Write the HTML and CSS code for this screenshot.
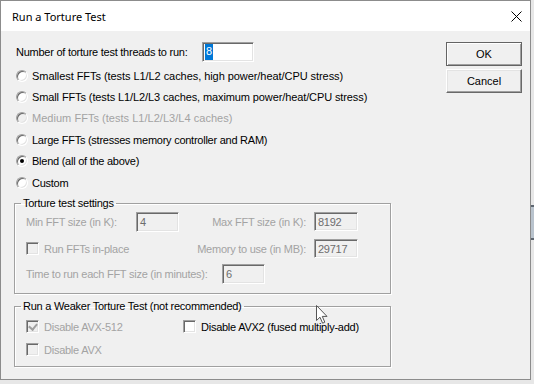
FILE: index.html
```html
<!DOCTYPE html>
<html>
<head>
<meta charset="utf-8">
<title>Run a Torture Test</title>
<link rel="stylesheet" href="styles.css">
</head>
<body>
<div class="window">
  <div class="titlebar">
    <span class="title">Run a Torture Test</span>
    <svg class="close" width="11" height="11" viewBox="0 0 11 11"><path d="M0.5 0.5L10.5 10.5M10.5 0.5L0.5 10.5" stroke="#000" stroke-width="1" fill="none"/></svg>
  </div>
  <div class="client">
    <div class="main">
      <div class="threads">
        <span class="threads-label">Number of torture test threads to run:</span>
        <div class="edit threads-edit"><span class="sel">8</span></div>
      </div>
      <div class="radios">
        <div class="radio-row wide1"><span class="radio"></span><span>Smallest FFTs (tests L1/L2 caches, high power/heat/CPU stress)</span></div>
        <div class="radio-row wide2"><span class="radio"></span><span>Small FFTs (tests L1/L2/L3 caches, maximum power/heat/CPU stress)</span></div>
        <div class="radio-row disabled wide3"><span class="radio"></span><span>Medium FFTs (tests L1/L2/L3/L4 caches)</span></div>
        <div class="radio-row"><span class="radio"></span><span>Large FFTs (stresses memory controller and RAM)</span></div>
        <div class="radio-row"><span class="radio checked"></span><span>Blend (all of the above)</span></div>
        <div class="radio-row"><span class="radio"></span><span>Custom</span></div>
      </div>
      <fieldset class="group settings">
        <legend>Torture test settings</legend>
        <div class="grid-row first">
          <span class="dim">Min FFT size (in K):</span>
          <div class="edit dis">4</div>
          <span class="dim right">Max FFT size (in K):</span>
          <div class="edit dis short">8192</div>
        </div>
        <div class="grid-row second">
          <label class="check-item span2 dim"><span class="check dis"></span>Run FFTs in-place</label>
          <span class="dim right">Memory to use (in MB):</span>
          <div class="edit dis short">29717</div>
        </div>
        <div class="time-row">
          <span class="dim time-label">Time to run each FFT size (in minutes):</span>
          <div class="edit dis">6</div>
        </div>
      </fieldset>
      <fieldset class="group weaker">
        <legend>Run a Weaker Torture Test (not recommended)</legend>
        <div class="check-row">
          <label class="check-item first-col dim"><span class="check dis checked"></span>Disable AVX-512</label>
          <label class="check-item"><span class="check"></span>Disable AVX2 (fused multiply-add)</label>
        </div>
        <div class="check-row second">
          <label class="check-item first-col dim"><span class="check dis"></span>Disable AVX</label>
        </div>
      </fieldset>
    </div>
    <div class="buttons">
      <button class="btn default">OK</button>
      <button class="btn">Cancel</button>
    </div>
  </div>
</div>
<svg class="cursor" width="13" height="20" viewBox="0 0 13 20"><path d="M0.5 0.5L0.5 15.5L4 12.2L6.6 18.2L8.8 17.2L6.3 11.4L11 11.4Z" fill="#fff" stroke="#555" stroke-width="1" stroke-linejoin="round"/></svg>
</body>
</html>
```
FILE: styles.css
```css
* { box-sizing: border-box; }
html, body { margin: 0; height: 100%; }
body {
  position: relative;
  overflow: hidden;
  background:
    linear-gradient(#5d6670, #5d6670) 531px 205px / 3px 2px no-repeat,
    linear-gradient(#b9c3cd, #b9c3cd) 531px 207px / 3px 31px no-repeat,
    linear-gradient(#5d6670, #5d6670) 531px 238px / 3px 2px no-repeat,
    #e7e7e7;
  font-family: "Liberation Sans", Arial, sans-serif;
  font-size: 11px;
  letter-spacing: -0.25px;
  color: #000;
}
.window {
  width: 531px;
  height: 380px;
  border: 1px solid #8c8c8c;
  background: #f0f0f0;
  display: flex;
  flex-direction: column;
}
.titlebar {
  height: 30px;
  flex: none;
  background: #fff;
  display: flex;
  align-items: center;
  justify-content: space-between;
  padding: 0 8px 0 11px;
  font-family: "Noto Sans", "Open Sans", sans-serif;
  font-size: 11px;
  letter-spacing: 0;
}
.close { display: block; }
.client {
  display: flex;
  padding: 11px 8px 0 13px;
  flex: 1;
}
.main { width: 377px; flex: none; }
.threads {
  display: flex;
  align-items: center;
  height: 20px;
  padding-left: 2px;
}
.threads-label { width: 186px; flex: none; }
.edit {
  height: 20px;
  width: 43px;
  flex: none;
  border: 1px solid;
  border-color: #a0a0a0 #ffffff #ffffff #a0a0a0;
  box-shadow: inset 1px 1px 0 #696969, inset -1px -1px 0 #e3e3e3;
  background: #fff;
  padding: 0 2px 0 3px;
  display: flex;
  align-items: center;
}
.threads-edit { width: 52px; padding-left: 2px; }
.sel {
  background: #0078d7;
  color: #fff;
  padding: 1px 1px 2px;
  line-height: 13px;
}
.edit.dis { background: #f0f0f0; color: #6d6d6d; }
.edit.short { width: 44px; height: 19px; }
.radios { margin-top: 3px; padding-left: 2px; }
.radio-row {
  height: 21.4px;
  display: flex;
  align-items: center;
}
.radio-row.wide1 { letter-spacing: -0.06px; }
.radio-row.wide2 { letter-spacing: -0.11px; }
.radio-row.wide3 { letter-spacing: 0.03px; }
.radio-row.disabled { color: #a3a3a3; }
.radio {
  position: relative;
  width: 12px;
  height: 12px;
  flex: none;
  margin-right: 4px;
  border-radius: 50%;
  background: #fff;
  border: 1px solid;
  border-color: #a0a0a0 #ffffff #ffffff #a0a0a0;
  box-shadow: inset 1px 1px 0 #696969, inset -1px -1px 0 #e3e3e3;
}
.disabled .radio { background: #f0f0f0; }
.radio.checked::after {
  content: "";
  position: absolute;
  left: 3px;
  top: 3px;
  width: 4px;
  height: 4px;
  border-radius: 50%;
  background: #000;
}
.group {
  margin: 0;
  min-width: 0;
  width: 377px;
  border: 1px solid #a0a0a0;
  box-shadow: inset 1px 1px 0 #fff, 1px 1px 0 #fff;
  padding: 0 0 0 6px;
}
.group legend {
  padding: 0 2px;
  line-height: 13px;
  height: 13px;
}
.settings { margin-top: 3.6px; height: 97px; }
.dim { color: #a3a3a3; }
.grid-row {
  display: grid;
  grid-template-columns: 110px 43px 135px 44px;
  align-items: center;
  height: 20px;
  padding-left: 5px;
}
.grid-row.first { margin-top: 2px; }
.grid-row.second { margin-top: 7px; }
.grid-row .right { text-align: right; padding-right: 8px; }
.span2 { grid-column: span 2; }
.time-row {
  display: flex;
  align-items: center;
  height: 20px;
  margin-top: 5px;
  padding-left: 5px;
}
.time-label { width: 196px; flex: none; }
.check-item { display: flex; align-items: center; }
.check {
  position: relative;
  width: 13px;
  height: 13px;
  flex: none;
  margin-right: 5px;
  background: #fff;
  border: 1px solid;
  border-color: #a0a0a0 #ffffff #ffffff #a0a0a0;
  box-shadow: inset 1px 1px 0 #696969, inset -1px -1px 0 #e3e3e3;
}
.check.dis { background: #f0f0f0; }
.check.checked::after {
  content: "";
  position: absolute;
  left: 2px;
  top: 1px;
  width: 4px;
  height: 6px;
  border: solid #a0a0a0;
  border-width: 0 2px 2px 0;
  transform: translate(1px, 0) rotate(40deg);
}
.weaker { margin-top: 6px; height: 67px; }
.check-row {
  display: flex;
  align-items: center;
  height: 16px;
  margin-top: 6px;
  padding-left: 5px;
}
.check-row.second { margin-top: 7px; }
.first-col { width: 157px; flex: none; }
.buttons {
  margin-left: auto;
  display: flex;
  flex-direction: column;
  gap: 3px;
}
.btn {
  width: 76px;
  height: 24px;
  margin: 0;
  padding: 0;
  font: inherit;
  letter-spacing: 0;
  color: #000;
  background: #f0f0f0;
  border: 1px solid;
  border-color: #ffffff #696969 #696969 #ffffff;
  box-shadow: inset -1px -1px 0 #a0a0a0, inset 1px 1px 0 #e3e3e3;
}
.btn.default {
  border-color: #646464;
  box-shadow: inset 1px 1px 0 #fff, inset -1px -1px 0 #a0a0a0;
}
.cursor { position: absolute; left: 316px; top: 305px; }
```
